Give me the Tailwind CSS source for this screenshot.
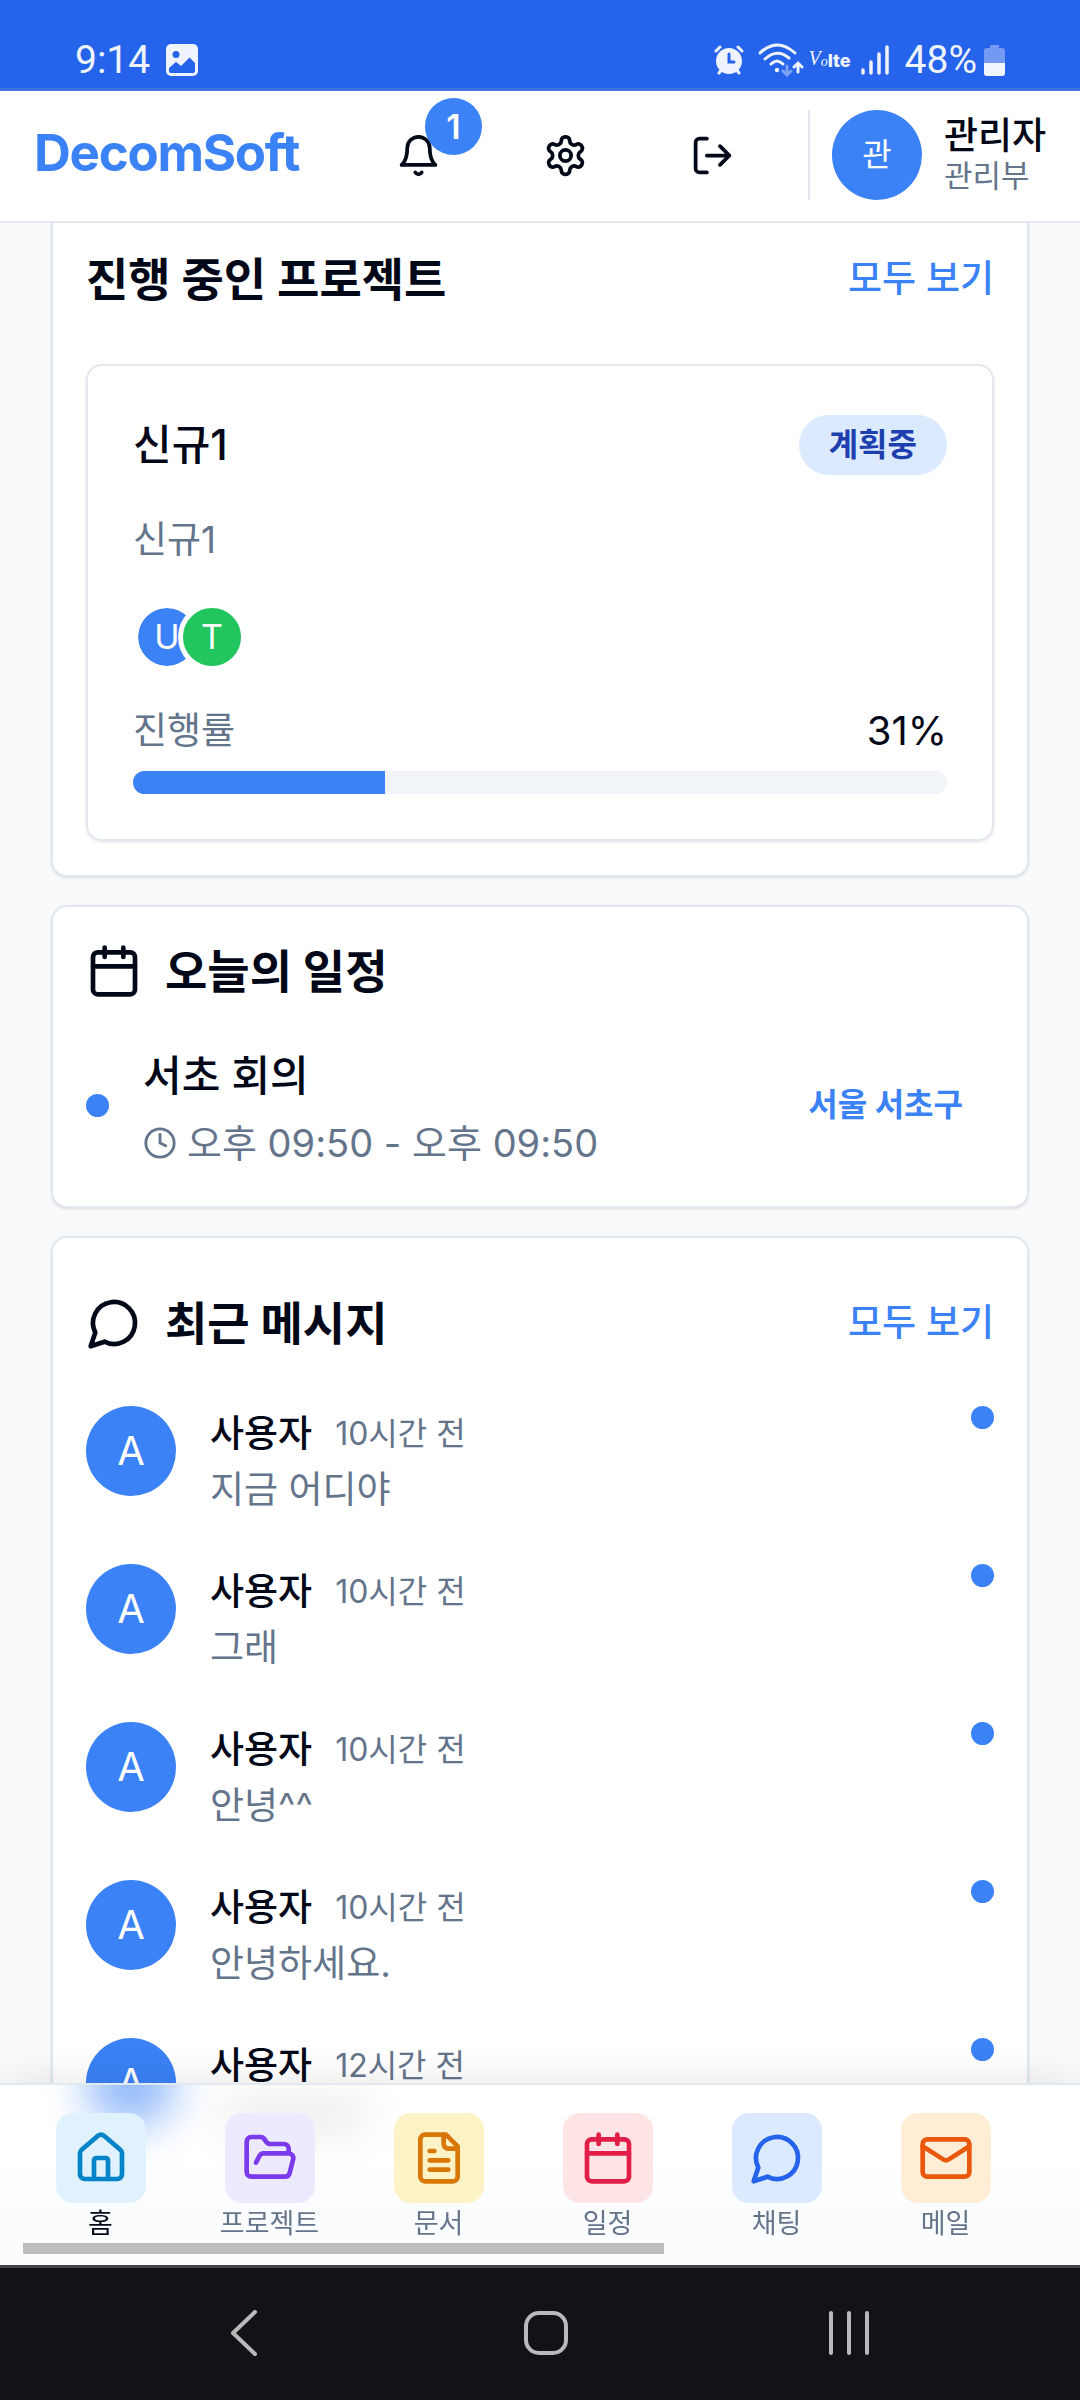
<!DOCTYPE html>
<html lang="ko">
<head>
<meta charset="utf-8">
<meta name="viewport" content="width=device-width, initial-scale=1">
<title>DecomSoft</title>
<script src="https://cdn.jsdelivr.net/npm/@tailwindcss/browser@4"></script>
</head>
<body class="min-h-screen bg-[#f8fafc] text-[#020817] font-['Inter','Noto_Sans_CJK_KR',sans-serif] text-[37px]">

<!-- Icon sprite -->
<svg class="hidden" aria-hidden="true">
  <symbol id="calendar" viewBox="0 0 24 24"><path d="M8 2v4M16 2v4M3 10h18"/><rect x="3" y="4" width="18" height="18" rx="2"/></symbol>
  <symbol id="message" viewBox="0 0 24 24"><path d="M7.9 20A9 9 0 1 0 4 16.1L2 22Z"/></symbol>
</svg>

<div class="sticky top-0 z-10">
  <!-- Status bar -->
  <div class="h-[91px] border-b-[3px] border-[#3f71dd] bg-[#2563eb] px-[75px] pt-[36px] flex items-start justify-between text-[#eef3fe] font-['Roboto',sans-serif] text-[39px]">
    <div class="flex items-center gap-[16px] leading-[48px]">
      <span>9:14</span>
      <svg class="size-[32px]" viewBox="0 0 32 32" fill="currentColor"><path fill-rule="evenodd" d="M5 0h22a5 5 0 0 1 5 5v22a5 5 0 0 1-5 5H5a5 5 0 0 1-5-5V5a5 5 0 0 1 5-5Zm5 7a3.5 3.5 0 1 0 0 7 3.5 3.5 0 0 0 0-7ZM3 24v3q0 2 2 2h22q2 0 2-2v-8l-5.500-5.500L15 22l-5-4Z"/></svg>
    </div>
    <div class="flex items-center leading-[48px]">
      <svg class="h-[30px] w-[30px] mr-[14px]" viewBox="0 0 30 30" fill="none" stroke="currentColor" stroke-linecap="round"><circle cx="15" cy="16" r="13" fill="currentColor" stroke="none"/><path d="M2 6l4-4M28 6l-4-4M5 28l3-4M25 28l-3-4" stroke-width="3"/><path d="M15 9v8h5" stroke="#2563eb" stroke-width="3"/></svg>
      <svg class="h-[34px] w-[46px] mr-[5px]" viewBox="0 0 46 34" fill="none" stroke="currentColor" stroke-width="3" stroke-linecap="round"><path d="M2 10Q19-6 37 10M7 16Q19 5 31 15M13 21Q19 15 25 21"/><circle cx="19" cy="27" r="2.200" fill="currentColor" stroke="none"/><path d="M29 23v9m-4-4l4 4l4-4" stroke="#7ea3f5"/><path d="M40 29V20m-4 4l4-4l4 4"/></svg>
      <span class="flex items-center mr-[10px] leading-none"><i class="font-['Liberation_Serif'] text-[20px] pb-1">V</i><i class="pt-1 font-['Liberation_Serif'] text-[14px]">o</i><span class="font-['Inter'] font-extrabold text-[18px] pt-0.5">lte</span></span>
      <svg class="h-[30px] w-[28px] mr-[16px]" viewBox="0 0 28 30" stroke="currentColor" stroke-width="3.500" stroke-linecap="round"><path d="M2 25v3M10 17v11M18 9v19M26 2v26"/></svg>
      <span>48%</span>
      <svg class="h-[32px] w-[21px] ml-[7px]" viewBox="0 0 21 32"><path d="M6 1h9v3h3q3 0 3 3v22q0 3-3 3H3q-3 0-3-3V7q0-3 3-3h3Z" fill="#7399f2"/><path d="M0 19h21v10q0 3-3 3H3q-3 0-3-3Z" fill="#f1f5fe"/></svg>
    </div>
  </div>

  <!-- App header -->
  <header class="h-[132px] bg-white border-b-2 border-[#e2e8f0] px-[34px] pb-[2px] flex items-center justify-between">
    <a href="#" class="text-[51px] font-bold tracking-tight text-[#3b82f6] leading-[60px] pb-1">DecomSoft</a>
    <div class="flex items-center">
      <div class="flex gap-[45px] mr-[44px]">
        <button aria-label="알림" class="relative size-[102px] grid place-items-center">
          <svg class="size-[45px]" viewBox="0 0 24 24" fill="none" stroke="currentColor" stroke-width="2" stroke-linecap="round" stroke-linejoin="round"><path d="M6 8a6 6 0 0 1 12 0c0 7 3 9 3 9H3s3-2 3-9"/><path d="M10.300 21a1.940 1.940 0 0 0 3.400 0"/></svg>
          <span class="absolute -right-[12px] -top-[6px] size-[57px] rounded-full bg-[#3b82f6] text-white grid place-items-center text-[34px] font-semibold leading-none">1</span>
        </button>
        <button aria-label="설정" class="size-[102px] grid place-items-center">
          <svg class="size-[45px]" viewBox="0 0 24 24" fill="none" stroke="currentColor" stroke-width="2" stroke-linecap="round" stroke-linejoin="round"><path d="M12.220 2h-.44a2 2 0 0 0-2 2v.18a2 2 0 0 1-1 1.730l-.43.25a2 2 0 0 1-2 0l-.15-.08a2 2 0 0 0-2.730.73l-.22.38a2 2 0 0 0 .73 2.730l.15.1a2 2 0 0 1 1 1.720v.51a2 2 0 0 1-1 1.740l-.15.09a2 2 0 0 0-.73 2.730l.22.38a2 2 0 0 0 2.730.73l.15-.08a2 2 0 0 1 2 0l.43.25a2 2 0 0 1 1 1.730V20a2 2 0 0 0 2 2h.44a2 2 0 0 0 2-2v-.18a2 2 0 0 1 1-1.730l.43-.25a2 2 0 0 1 2 0l.15.08a2 2 0 0 0 2.730-.73l.22-.39a2 2 0 0 0-.73-2.730l-.15-.08a2 2 0 0 1-1-1.740v-.5a2 2 0 0 1 1-1.740l.15-.09a2 2 0 0 0 .73-2.730l-.22-.38a2 2 0 0 0-2.730-.73l-.15.08a2 2 0 0 1-2 0l-.43-.25a2 2 0 0 1-1-1.730V4a2 2 0 0 0-2-2z"/><circle cx="12" cy="12" r="3"/></svg>
        </button>
        <button aria-label="로그아웃" class="size-[102px] grid place-items-center">
          <svg class="size-[45px]" viewBox="0 0 24 24" fill="none" stroke="currentColor" stroke-width="2" stroke-linecap="round" stroke-linejoin="round"><path d="M9 21H5a2 2 0 0 1-2-2V5a2 2 0 0 1 2-2h4M16 17l5-5-5-5M21 12H9"/></svg>
        </button>
      </div>
      <div class="flex items-center gap-[22px] border-l-2 border-[#e2e8f0] pl-[22px]">
        <span class="size-[90px] rounded-full bg-[#3b82f6] text-white grid place-items-center text-[32px] leading-none">관</span>
        <div class="leading-[40px] pt-[2px]">
          <p class="font-medium">관리자</p>
          <p class="text-[31px] leading-[40px] text-[#64748b]">관리부</p>
        </div>
      </div>
    </div>
  </header>
</div>

<main class="px-[51px] flex flex-col gap-[28px]">
  <!-- Projects -->
  <section class="bg-white border-2 border-t-0 border-[#e2e8f0] rounded-b-[16px] shadow-sm px-[33px] pt-[32px] pb-[34px]">
    <div class="flex items-center justify-between mb-[61px] leading-[48px]">
      <h2 class="text-[46px] font-bold">진행 중인 프로젝트</h2>
      <a href="#" class="font-medium text-[#3b82f6]">모두 보기</a>
    </div>
    <article class="border-2 border-[#e2e8f0] rounded-[16px] shadow-sm px-[45px] pt-[49px] pb-[45px]">
      <div class="flex items-center justify-between">
        <h3 class="text-[42px] font-medium leading-[60px]">신규1</h3>
        <span class="rounded-full bg-[#dbeafe] text-[#1e40af] text-[32px] font-bold leading-[60px] px-[30px]">계획중</span>
      </div>
      <p class="mt-[40px] leading-[50px] text-[#64748b]">신규1</p>
      <div class="mt-[38px] flex text-white text-[34px] leading-none">
        <span class="size-[68px] rounded-full border-5 border-white bg-[#3b82f6] bg-clip-padding grid place-items-center">U</span>
        <span class="size-[68px] -ml-[23px] rounded-full border-5 border-white bg-[#22c55e] grid place-items-center">T</span>
      </div>
      <div class="mt-[35px] flex items-center justify-between leading-[50px]">
        <span class="text-[#64748b]">진행률</span>
        <span class="text-[40px]">31%</span>
      </div>
      <div role="progressbar" aria-valuenow="31" aria-label="진행률" class="mt-[15px] h-[23px] rounded-full bg-[#f1f5f9] overflow-hidden">
        <div class="h-full bg-[#3b82f6]" style="width:31%"></div>
      </div>
    </article>
  </section>

  <!-- Schedule -->
  <section class="bg-white border-2 border-[#e2e8f0] rounded-[16px] shadow-sm px-[33px] pt-[36px] pb-[40px]">
    <h2 class="flex items-center gap-[23px] text-[46px] font-bold leading-[56px]">
      <svg class="size-[56px]" fill="none" stroke="currentColor" stroke-width="2" stroke-linecap="round" stroke-linejoin="round"><use href="#calendar"/></svg>
      오늘의 일정
    </h2>
    <div class="mt-[45px] flex items-center">
      <span class="size-[23px] rounded-full bg-[#3b82f6] mr-[34px]"></span>
      <div class="flex-1">
        <h3 class="text-[42px] font-medium leading-[64px]">서초 회의</h3>
        <p class="mt-[12px] flex items-center gap-[10px] text-[38px] leading-[46px] text-[#64748b]">
          <svg class="size-[34px]" viewBox="0 0 24 24" fill="none" stroke="currentColor" stroke-width="2" stroke-linecap="round" stroke-linejoin="round"><circle cx="12" cy="12" r="10"/><path d="M12 6v6l4 2"/></svg>
          오후 09:50 - 오후 09:50
        </p>
      </div>
      <span class="px-[31px] text-[32px] font-bold text-[#3b82f6]">서울 서초구</span>
    </div>
  </section>

  <!-- Messages -->
  <section class="bg-white border-2 border-[#e2e8f0] rounded-[16px] shadow-sm px-[33px] pt-[57px] pb-[34px]">
    <div class="flex items-center justify-between leading-[56px]">
      <h2 class="flex items-center gap-[23px] text-[46px] font-bold leading-[56px]">
        <svg class="size-[56px]" fill="none" stroke="currentColor" stroke-width="2" stroke-linecap="round" stroke-linejoin="round"><use href="#message"/></svg>
        최근 메시지
      </h2>
      <a href="#" class="font-medium text-[#3b82f6]">모두 보기</a>
    </div>
    <ul class="mt-[55px] flex flex-col gap-[46px] leading-[56px]">
      <li class="flex items-start">
        <span class="size-[90px] rounded-full bg-[#3b82f6] text-white grid place-items-center text-[40px] mr-[34px]">A</span>
        <div class="flex-1">
          <p class="flex items-center gap-[23px]"><strong class="font-medium">사용자</strong><time class="text-[32px] leading-[56px] text-[#64748b]">10시간 전</time></p>
          <p class="text-[#64748b]">지금 어디야</p>
        </div>
        <span class="size-[23px] rounded-full bg-[#3b82f6]"></span>
      </li>
      <li class="flex items-start">
        <span class="size-[90px] rounded-full bg-[#3b82f6] text-white grid place-items-center text-[40px] mr-[34px]">A</span>
        <div class="flex-1">
          <p class="flex items-center gap-[23px]"><strong class="font-medium">사용자</strong><time class="text-[32px] leading-[56px] text-[#64748b]">10시간 전</time></p>
          <p class="text-[#64748b]">그래</p>
        </div>
        <span class="size-[23px] rounded-full bg-[#3b82f6]"></span>
      </li>
      <li class="flex items-start">
        <span class="size-[90px] rounded-full bg-[#3b82f6] text-white grid place-items-center text-[40px] mr-[34px]">A</span>
        <div class="flex-1">
          <p class="flex items-center gap-[23px]"><strong class="font-medium">사용자</strong><time class="text-[32px] leading-[56px] text-[#64748b]">10시간 전</time></p>
          <p class="text-[#64748b]">안녕^^</p>
        </div>
        <span class="size-[23px] rounded-full bg-[#3b82f6]"></span>
      </li>
      <li class="flex items-start">
        <span class="size-[90px] rounded-full bg-[#3b82f6] text-white grid place-items-center text-[40px] mr-[34px]">A</span>
        <div class="flex-1">
          <p class="flex items-center gap-[23px]"><strong class="font-medium">사용자</strong><time class="text-[32px] leading-[56px] text-[#64748b]">10시간 전</time></p>
          <p class="text-[#64748b]">안녕하세요.</p>
        </div>
        <span class="size-[23px] rounded-full bg-[#3b82f6]"></span>
      </li>
      <li class="flex items-start h-[112px]">
        <span class="size-[90px] rounded-full bg-[#3b82f6] text-white grid place-items-center text-[40px] mr-[34px]">A</span>
        <div class="flex-1">
          <p class="flex items-center gap-[23px]"><strong class="font-medium">사용자</strong><time class="text-[32px] leading-[56px] text-[#64748b]">12시간 전</time></p>
        </div>
        <span class="size-[23px] rounded-full bg-[#3b82f6]"></span>
      </li>
    </ul>
  </section>
</main>

<!-- Tab bar -->
<nav class="fixed inset-x-0 bottom-[135px] z-20 border-t-2 border-[#e2e8f0] bg-linear-to-b from-white from-40% to-[#fbfcfe] to-70% shadow-[0_-10px_38px_-8px_rgba(0,0,0,0.1)] pt-[28px] pb-[11px]">
  <div class="absolute inset-0 overflow-hidden" aria-hidden="true">
    <div class="absolute left-[86px] -top-[47px] size-[90px] rounded-full bg-[#3b82f6]/55 blur-[22px]"></div>
    <div class="absolute left-[220px] top-[10px] w-[150px] h-[40px] rounded-full bg-black/7 blur-[20px]"></div>
  </div>
  <div class="relative flex pl-[16px] text-[27px] leading-[28px] text-[#64748b]">
    <a href="#" aria-current="page" class="w-[169px] shrink-0 flex flex-col items-center gap-[7px] text-[#020817]">
      <span class="size-[90px] rounded-[17px] bg-[#e0f2fe] text-[#0284c7] grid place-items-center"><svg class="size-[56px]" viewBox="0 0 24 24" fill="none" stroke="currentColor" stroke-width="2" stroke-linecap="round" stroke-linejoin="round"><path d="M15 21v-8a1 1 0 0 0-1-1h-4a1 1 0 0 0-1 1v8"/><path d="M3 10a2 2 0 0 1 .709-1.528l7-5.999a2 2 0 0 1 2.582 0l7 5.999A2 2 0 0 1 21 10v9a2 2 0 0 1-2 2H5a2 2 0 0 1-2-2z"/></svg></span>홈</a>
    <a href="#" class="w-[169px] shrink-0 flex flex-col items-center gap-[7px]">
      <span class="size-[90px] rounded-[17px] bg-[#ede9fe] text-[#7c3aed] grid place-items-center"><svg class="size-[56px]" viewBox="0 0 24 24" fill="none" stroke="currentColor" stroke-width="2" stroke-linecap="round" stroke-linejoin="round"><path d="m6 14 1.500-2.900A2 2 0 0 1 9.240 10H20a2 2 0 0 1 1.940 2.500l-1.540 6a2 2 0 0 1-1.950 1.500H4a2 2 0 0 1-2-2V5a2 2 0 0 1 2-2h3.900a2 2 0 0 1 1.690.9l.81 1.200a2 2 0 0 0 1.670.9H18a2 2 0 0 1 2 2v2"/></svg></span>프로젝트</a>
    <a href="#" class="w-[169px] shrink-0 flex flex-col items-center gap-[7px]">
      <span class="size-[90px] rounded-[17px] bg-[#fef3c7] text-[#d97706] grid place-items-center"><svg class="size-[56px]" viewBox="0 0 24 24" fill="none" stroke="currentColor" stroke-width="2" stroke-linecap="round" stroke-linejoin="round"><path d="M15 2H6a2 2 0 0 0-2 2v16a2 2 0 0 0 2 2h12a2 2 0 0 0 2-2V7Z"/><path d="M14 2v4a2 2 0 0 0 2 2h4M10 9H8M16 13H8M16 17H8"/></svg></span>문서</a>
    <a href="#" class="w-[169px] shrink-0 flex flex-col items-center gap-[7px]">
      <span class="size-[90px] rounded-[17px] bg-[#ffe4e6] text-[#e11d48] grid place-items-center"><svg class="size-[56px]" fill="none" stroke="currentColor" stroke-width="2" stroke-linecap="round" stroke-linejoin="round"><use href="#calendar"/></svg></span>일정</a>
    <a href="#" class="w-[169px] shrink-0 flex flex-col items-center gap-[7px]">
      <span class="size-[90px] rounded-[17px] bg-[#dbeafe] text-[#2563eb] grid place-items-center"><svg class="size-[56px]" fill="none" stroke="currentColor" stroke-width="2" stroke-linecap="round" stroke-linejoin="round"><use href="#message"/></svg></span>채팅</a>
    <a href="#" class="w-[169px] shrink-0 flex flex-col items-center gap-[7px]">
      <span class="size-[90px] rounded-[17px] bg-[#ffedd5] text-[#ea580c] grid place-items-center"><svg class="size-[56px]" viewBox="0 0 24 24" fill="none" stroke="currentColor" stroke-width="2" stroke-linecap="round" stroke-linejoin="round"><rect x="2" y="4" width="20" height="16" rx="2"/><path d="m22 7-8.970 5.700a1.940 1.940 0 0 1-2.060 0L2 7"/></svg></span>메일</a>
  </div>
  <div class="relative mt-[5px] px-[23px]"><div class="h-[11px] w-[62%] bg-[#bdbdbd]"></div></div>
</nav>

<!-- System navigation -->
<div class="fixed inset-x-0 bottom-0 z-20 h-[135px] border-t-3 border-[#434445] bg-[#121316] text-[#b8b9ba] flex items-center justify-center pl-[11px]">
  <button aria-label="뒤로" class="w-[302px] grid place-items-center"><svg class="size-[48px]" viewBox="0 0 48 48" fill="none" stroke="currentColor" stroke-width="4" stroke-linecap="round" stroke-linejoin="round"><path d="M35 2L13 23l22 21"/></svg></button>
  <button aria-label="홈 화면" class="w-[302px] grid place-items-center"><svg class="size-[48px]" viewBox="0 0 48 48" fill="none" stroke="currentColor" stroke-width="4"><rect x="4" y="3" width="40" height="40" rx="13"/></svg></button>
  <button aria-label="최근 앱" class="w-[302px] grid place-items-center"><svg class="size-[48px]" viewBox="0 0 48 48" stroke="currentColor" stroke-width="4" stroke-linecap="round"><path d="M7 3v40M25 3v40M43 3v40"/></svg></button>
</div>
</body>
</html>
